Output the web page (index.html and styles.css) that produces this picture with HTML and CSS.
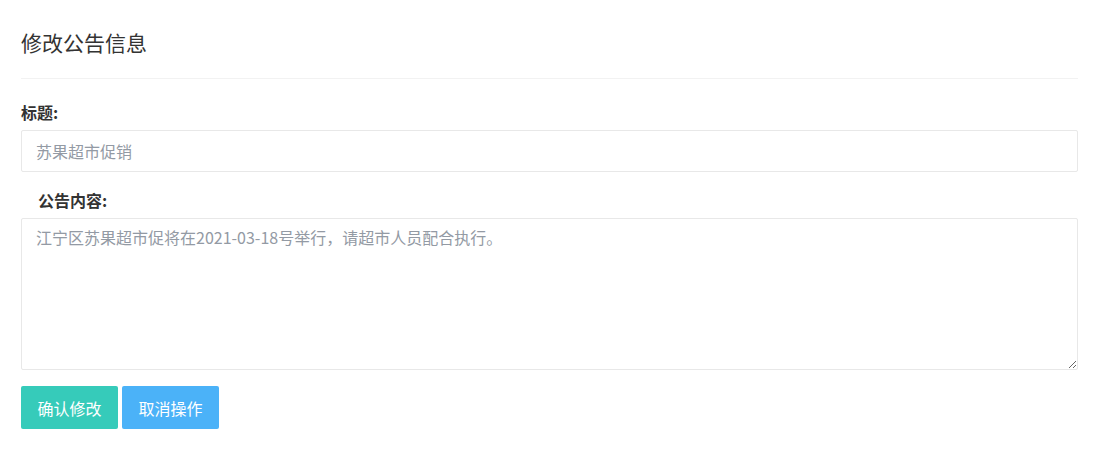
FILE: index.html
```html
<!DOCTYPE html>
<html lang="zh-CN">
<head>
<meta charset="utf-8">
<title>修改公告信息</title>
<link rel="stylesheet" href="styles.css">
</head>
<body>
<div class="page">
  <div class="page-header">
    <h2 class="page-title">修改公告信息</h2>
  </div>
  <form class="notice-form">
    <label class="field-label">标题:</label>
    <input class="field-input" type="text" placeholder="苏果超市促销">
    <label class="field-label field-label-indent">公告内容:</label>
    <textarea class="field-textarea" placeholder="江宁区苏果超市促将在2021-03-18号举行，请超市人员配合执行。"></textarea>
    <div class="actions">
      <button type="button" class="btn btn-confirm">确认修改</button>
      <button type="button" class="btn btn-cancel">取消操作</button>
    </div>
  </form>
</div>
</body>
</html>
```
FILE: styles.css
```css
* { box-sizing: border-box; }
html, body {
  margin: 0;
  padding: 0;
  background: #fff;
}
body {
  font-family: "Noto Sans CJK SC", "Noto Sans", "Liberation Sans", sans-serif;
  color: #333;
}
.page {
  padding: 28px 24px 0 21px;
}
.page-header {
  padding-bottom: 22px;
  border-bottom: 1px solid #f2f2f2;
}
.page-title {
  margin: 0;
  font-size: 21px;
  font-weight: normal;
  line-height: 28px;
  color: #333;
}
.notice-form {
  display: flex;
  flex-direction: column;
  padding-top: 23px;
}
.field-label {
  display: block;
  font-size: 16px;
  font-weight: bold;
  line-height: 20px;
  color: #333;
  margin-bottom: 8px;
}
.field-label-indent {
  padding-left: 17px;
  margin-top: 18px;
}
.field-input,
.field-textarea {
  display: block;
  width: 100%;
  border: 1px solid #e8e8e8;
  border-radius: 2px;
  font-family: inherit;
  font-size: 16px;
  color: #333;
  background: #fff;
  outline: none;
}
.field-input {
  height: 42px;
  padding: 0 14px;
}
.field-textarea {
  height: 152px;
  padding: 7px 14px;
  line-height: 22px;
  resize: vertical;
}
.field-input::placeholder,
.field-textarea::placeholder {
  color: #939aa4;
  opacity: 1;
}
.actions {
  display: flex;
  gap: 4px;
  margin-top: 16px;
}
.btn {
  height: 43px;
  width: 97px;
  padding: 0;
  border: none;
  border-radius: 2px;
  font-family: inherit;
  font-size: 16px;
  color: #fff;
  cursor: pointer;
}
.btn-confirm { background: #36cbba; }
.btn-cancel { background: #4bb2f8; }
```
